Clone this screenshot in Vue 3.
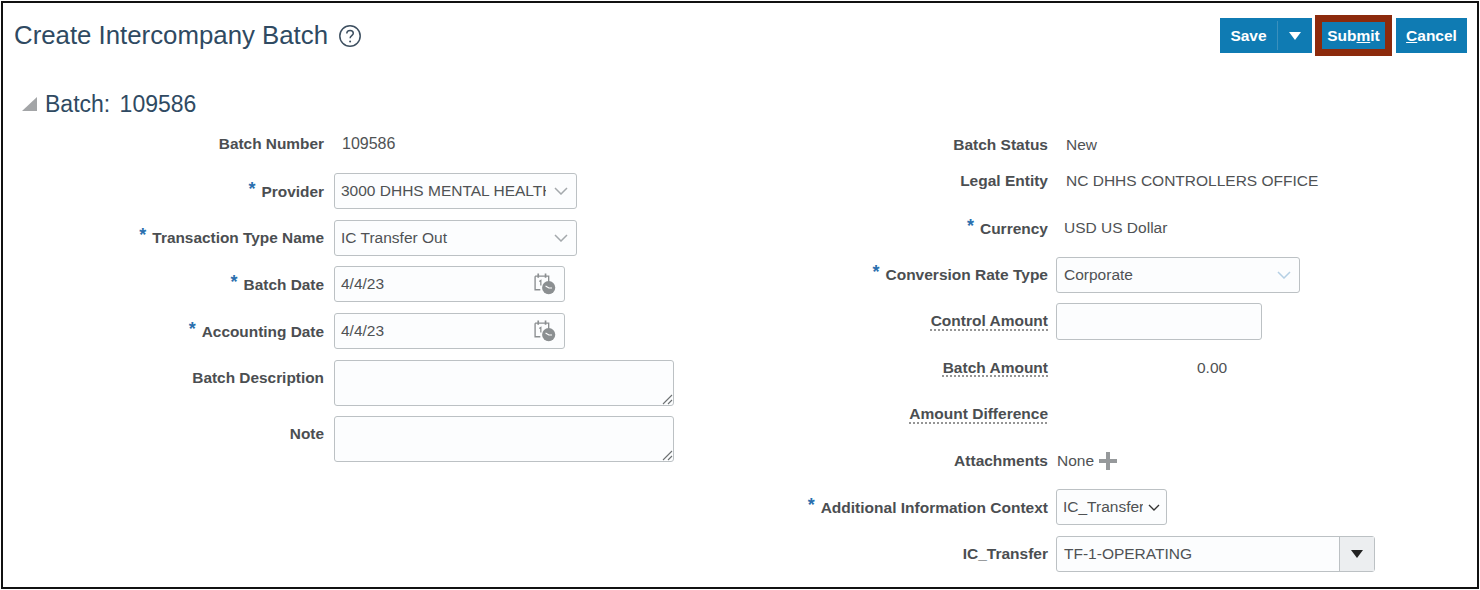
<script setup>
const leftRows = [
  { label: 'Provider', req: true, value: '3000 DHHS MENTAL HEALTH', type: 'select' },
  { label: 'Transaction Type Name', req: true, value: 'IC Transfer Out', type: 'select' },
  { label: 'Batch Date', req: true, value: '4/4/23', type: 'date' },
  { label: 'Accounting Date', req: true, value: '4/4/23', type: 'date' },
]
</script>

<template>
  <div class="frame">
    <header class="head">
      <div class="title-wrap">
        <h1 class="title">Create Intercompany Batch</h1>
        <svg class="help" width="24" height="24" viewBox="0 0 24 24" fill="none">
          <circle cx="12" cy="12" r="10.2" stroke="#3d4f60" stroke-width="1.5" />
          <path d="M8.8 9.6c0-2 1.4-3.2 3.3-3.2s3.2 1.2 3.2 2.9c0 2.4-3.2 2.4-3.2 5" stroke="#3d4f60" stroke-width="1.5" />
          <circle cx="12.1" cy="17.4" r="1" fill="#3d4f60" />
        </svg>
      </div>
      <div class="actions">
        <div class="btn save">
          <span class="save-label">Save</span>
          <span class="save-arrow"><svg width="12" height="8" viewBox="0 0 12 8"><path d="M0 0h12L6 8z" fill="#fff" /></svg></span>
        </div>
        <div class="submit-frame"><div class="btn submit">Sub<u>m</u>it</div></div>
        <div class="btn cancel"><u>C</u>ancel</div>
      </div>
    </header>

    <div class="section">
      <svg class="disclose" width="16" height="14" viewBox="0 0 16 14"><path d="M15 0v14H0z" fill="#a3a5a7" /></svg>
      <h2 class="section-title">Batch: 109586</h2>
    </div>

    <div class="form">
      <div class="col left">
        <div class="row">
          <span class="label">Batch Number</span>
          <span class="value num">109586</span>
        </div>
        <div v-for="r in leftRows" :key="r.label" class="row">
          <span class="label"><span class="req">*</span>{{ r.label }}</span>
          <div v-if="r.type === 'select'" class="input sel-box">
            <span class="clip">{{ r.value }}</span>
            <svg class="chev" width="14" height="8" viewBox="0 0 14 8" fill="none"><path d="M1 1l6 6 6-6" stroke="#a4a9ac" stroke-width="1.5" /></svg>
          </div>
          <div v-else class="input date-box">
            <span>{{ r.value }}</span>
            <svg class="cal" width="23" height="23" viewBox="0 0 22 22" fill="none">
              <path d="M2 4h13v6M2 4v13h5" stroke="#8b8f91" stroke-width="1.3" />
              <path d="M5 1.500v4M12 1.500v4" stroke="#8b8f91" stroke-width="1.6" />
              <path d="M6 9l1.500-1v5" stroke="#8b8f91" stroke-width="1.200" />
              <circle cx="15" cy="15" r="6.300" fill="#8b8f91" />
              <path d="M12 13.500l3.200 1.800h3" stroke="#fff" stroke-width="1.100" />
            </svg>
          </div>
        </div>
        <div class="area-row first-area">
          <span class="label area-label">Batch Description</span>
          <div class="input area"><svg class="grip" width="11" height="11" viewBox="0 0 11 11" fill="none"><path d="M1 10l9-9M6 10l4-4" stroke="#6d7173" stroke-width="1.100" /></svg></div>
        </div>
        <div class="area-row">
          <span class="label area-label">Note</span>
          <div class="input area"><svg class="grip" width="11" height="11" viewBox="0 0 11 11" fill="none"><path d="M1 10l9-9M6 10l4-4" stroke="#6d7173" stroke-width="1.100" /></svg></div>
        </div>
      </div>

      <div class="col right">
        <div class="row short">
          <span class="label">Batch Status</span>
          <span class="value tight">New</span>
        </div>
        <div class="row short">
          <span class="label">Legal Entity</span>
          <span class="value tight">NC DHHS CONTROLLERS OFFICE</span>
        </div>
        <div class="row spaced">
          <span class="label"><span class="req">*</span>Currency</span>
          <span class="value currency">USD US Dollar</span>
        </div>
        <div class="row">
          <span class="label"><span class="req">*</span>Conversion Rate Type</span>
          <div class="input rate">
            <span>Corporate</span>
            <svg class="chev" width="14" height="8" viewBox="0 0 14 8" fill="none"><path d="M1 1l6 6 6-6" stroke="#b5d0e4" stroke-width="1.500" /></svg>
          </div>
        </div>
        <div class="row">
          <span class="label"><span class="dotted">Control Amount</span></span>
          <div class="input amount"></div>
        </div>
        <div class="row">
          <span class="label"><span class="dotted">Batch Amount</span></span>
          <span class="value total">0.00</span>
        </div>
        <div class="row">
          <span class="label"><span class="dotted">Amount Difference</span></span>
        </div>
        <div class="row">
          <span class="label">Attachments</span>
          <span class="value attach">None
            <svg width="18" height="18" viewBox="0 0 18 18"><path d="M7 0h4v7h7v4h-7v7H7v-7H0V7h7z" fill="#96999b" /></svg>
          </span>
        </div>
        <div class="row">
          <span class="label"><span class="req">*</span>Additional Information Context</span>
          <div class="input context">
            <span class="clip">IC_Transfer</span>
            <svg class="chev" width="12" height="7" viewBox="0 0 12 7" fill="none"><path d="M1 1l5 5 5-5" stroke="#333" stroke-width="1.400" /></svg>
          </div>
        </div>
        <div class="row">
          <span class="label">IC_Transfer</span>
          <div class="combo">
            <span class="combo-text">TF-1-OPERATING</span>
            <span class="combo-btn"><svg width="12" height="8" viewBox="0 0 12 8"><path d="M0 0h12L6 8z" fill="#222" /></svg></span>
          </div>
        </div>
      </div>
    </div>
  </div>
</template>

<style>
html, body { margin: 0; background: #fff; overflow: hidden; }
</style>

<style scoped>
.frame {
  box-sizing: border-box;
  width: 1478px;
  height: 588px;
  margin: 1px 0 0 1px;
  border: 2px solid #111;
  background: #fff;
  font-family: "Liberation Sans", Arial, sans-serif;
  color: #4a4d50;
  position: relative;
}
.head {
  display: flex;
  justify-content: space-between;
  align-items: center;
  padding: 12px 10px 0 11px;
  height: 41px;
}
.title-wrap { display: flex; align-items: center; gap: 10px; }
.title { margin: 0; font-size: 25.800px; font-weight: 400; color: #2f4a62; line-height: 41px; }
.help { flex: none; }
.actions { display: flex; align-items: center; height: 41px; }
.btn {
  box-sizing: border-box;
  background: #0f7bb3;
  color: #fff;
  font-weight: 700;
  font-size: 15.500px;
  display: flex;
  align-items: center;
  justify-content: center;
}
.save { width: 92px; height: 35px; }
.save-label { flex: 1; text-align: center; }
.save-arrow {
  width: 34px;
  height: 29px;
  display: flex;
  align-items: center;
  justify-content: center;
  border-left: 1px solid #3a90bd;
}
.submit-frame {
  box-sizing: border-box;
  margin: 0 4px 0 3px;
  width: 77px;
  height: 41px;
  border: 7px solid #8c2a0c;
}
.submit { width: 100%; height: 100%; font-size: 15.500px; }
.cancel { width: 71px; height: 35px; }
.section {
  display: flex;
  align-items: center;
  height: 30px;
  margin-top: 33px;
  padding-left: 19px;
  gap: 7px;
}
.disclose { flex: none; }
.section-title { margin: 0; font-size: 23px; font-weight: 400; color: #2f4a62; word-spacing: 3px; }
.form { display: flex; }
.col { display: flex; flex-direction: column; }
.left { width: 700px; padding-top: 2px; --label: 321px; --gap: 10px; --row: 46.700px; --label-size: 15.400px; }
.right { padding-top: 8px; --label: 345px; --gap: 8px; --row: 46.500px; --label-size: 15.500px; }
.row {
  display: flex;
  align-items: center;
  height: var(--row);
  gap: var(--gap);
  flex: none;
}
.short { height: 36px; }
.spaced { margin-top: 6px; }
.label {
  width: var(--label);
  flex: none;
  text-align: right;
  font-weight: 700;
  font-size: var(--label-size);
  color: #4b4e51;
  box-sizing: border-box;
}
.req { color: #2a6fae; font-size: 18px; margin-right: 6px; position: relative; top: -2px; }
.dotted { text-decoration: underline dotted #777; text-underline-offset: 3px; }
.value { font-size: 15.500px; color: #4f5254; }
.tight { margin-left: 10px; }
.currency { margin-left: 8px; }
.num { margin-left: 8px; font-size: 16px; }
.input {
  box-sizing: border-box;
  flex: none;
  display: flex;
  align-items: center;
  border: 1.500px solid #bcc1c4;
  border-radius: 3px;
  background: #fcfdfe;
  font-size: 15.500px;
  color: #4f5254;
  padding-left: 6px;
  position: relative;
}
.clip { overflow: hidden; white-space: nowrap; }
.sel-box { width: 243px; height: 36px; padding-right: 8px; justify-content: space-between; }
.sel-box .clip { width: 205px; }
.date-box { width: 231px; height: 36px; justify-content: space-between; padding-right: 8px; }
.cal { flex: none; margin-top: -2px; }
.first-area { margin-top: 5.500px; }
.area-row { display: flex; gap: var(--gap); margin-bottom: 10px; }
.area-label { padding-top: 9px; }
.area { width: 340px; height: 46px; }
.grip { position: absolute; right: 0; bottom: 0; }
.rate { width: 244px; height: 36px; padding-left: 7px; justify-content: space-between; padding-right: 8px; }
.amount { width: 206px; height: 37px; }
.total { padding-left: 141px; }
.attach { display: flex; align-items: center; gap: 5px; margin-left: 1px; }
.context { width: 111px; height: 36px; justify-content: space-between; padding-right: 6px; }
.context .clip { width: 80px; }
.combo {
  width: 319px;
  height: 36px;
  box-sizing: border-box;
  display: flex;
  border: 1.500px solid #bcc1c4;
  border-radius: 3px;
  background: #fcfdfe;
  font-size: 15.500px;
  color: #4f5254;
}
.combo-text { flex: 1; padding-left: 7px; line-height: 33px; }
.combo-btn {
  width: 34px;
  background: #eceef0;
  border-left: 1.500px solid #bcc1c4;
  display: flex;
  align-items: center;
  justify-content: center;
}
</style>
